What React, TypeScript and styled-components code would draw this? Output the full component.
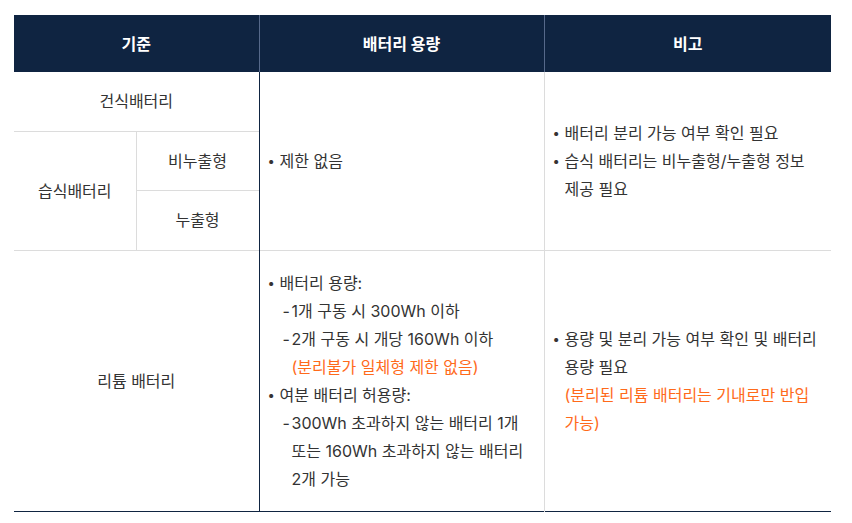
import React from 'react';
import styled, { createGlobalStyle } from 'styled-components';

const GlobalStyle = createGlobalStyle`
  body {
    margin: 0;
    background: #ffffff;
    font-family: Inter, 'Noto Sans CJK KR', sans-serif;
    color: #333333;
  }
`;

const Page = styled.div`
  padding: 15px 21px 0 14px;
`;

const Table = styled.table`
  width: 817px;
  border-collapse: collapse;
  table-layout: fixed;
  font-size: 16px;
  line-height: 28px;
  border-bottom: 1px solid #0f2441;
`;

const HeadCell = styled.th`
  height: 57px;
  padding: 0;
  background: #0f2441;
  color: #ffffff;
  font-weight: 700;
  text-align: center;
  border-left: 1px solid #56698a;
  &:first-child {
    border-left: none;
  }
`;

const Cell = styled.td<{ $align?: 'left' | 'center'; $h?: number; $navyLeft?: boolean }>`
  height: ${(p) => (p.$h ? `${p.$h}px` : 'auto')};
  padding: ${(p) => (p.$align === 'left' ? '18px 8px 18px 8px' : '0')};
  text-align: ${(p) => p.$align || 'center'};
  vertical-align: middle;
  border-top: 1px solid #dcdcdc;
  border-left: 1px solid ${(p) => (p.$navyLeft ? '#0f2441' : '#dcdcdc')};
  word-break: keep-all;
  box-sizing: border-box;
  &:first-child {
    border-left: none;
  }
`;

const FirstRowCell = styled(Cell)`
  border-top: none;
`;

const SubLabelCell = styled(Cell)`
  &:first-child {
    border-left: 1px solid #dcdcdc;
  }
`;

const List = styled.ul`
  list-style: none;
  margin: 0;
  padding: 0;
`;

const Item = styled.li`
  display: flex;
  &::before {
    content: '•';
    flex: 0 0 12px;
    font-size: 13px;
  }
`;

const ItemBody = styled.div`
  flex: 1;
`;

const SubList = styled.ul`
  list-style: none;
  margin: 0;
  padding: 0 0 0 3px;
`;

const SubItem = styled.li`
  display: flex;
  &::before {
    content: '-';
    flex: 0 0 9px;
  }
`;

const Note = styled.span`
  display: block;
  color: #ff6a1a;
`;

export default function App() {
  return (
    <>
      <GlobalStyle />
      <Page>
        <Table>
          <colgroup>
            <col style={{ width: 122 }} />
            <col style={{ width: 123 }} />
            <col style={{ width: 285 }} />
            <col style={{ width: 287 }} />
          </colgroup>
          <thead>
            <tr>
              <HeadCell colSpan={2}>기준</HeadCell>
              <HeadCell>배터리 용량</HeadCell>
              <HeadCell>비고</HeadCell>
            </tr>
          </thead>
          <tbody>
            <tr>
              <FirstRowCell colSpan={2} $h={59}>
                건식배터리
              </FirstRowCell>
              <FirstRowCell $align="left" rowSpan={3} $navyLeft>
                <List>
                  <Item>
                    <ItemBody>제한 없음</ItemBody>
                  </Item>
                </List>
              </FirstRowCell>
              <FirstRowCell $align="left" rowSpan={3}>
                <List>
                  <Item>
                    <ItemBody>배터리 분리 가능 여부 확인 필요</ItemBody>
                  </Item>
                  <Item>
                    <ItemBody>습식 배터리는 비누출형/누출형 정보 제공 필요</ItemBody>
                  </Item>
                </List>
              </FirstRowCell>
            </tr>
            <tr>
              <Cell rowSpan={2}>습식배터리</Cell>
              <Cell $h={59}>비누출형</Cell>
            </tr>
            <tr>
              <SubLabelCell $h={60}>누출형</SubLabelCell>
            </tr>
            <tr>
              <Cell colSpan={2}>리튬 배터리</Cell>
              <Cell $align="left" $navyLeft>
                <List>
                  <Item>
                    <ItemBody>
                      배터리 용량:
                      <SubList>
                        <SubItem>
                          <ItemBody>1개 구동 시 300Wh 이하</ItemBody>
                        </SubItem>
                        <SubItem>
                          <ItemBody>
                            2개 구동 시 개당 160Wh 이하
                            <Note>(분리불가 일체형 제한 없음)</Note>
                          </ItemBody>
                        </SubItem>
                      </SubList>
                    </ItemBody>
                  </Item>
                  <Item>
                    <ItemBody>
                      여분 배터리 허용량:
                      <SubList>
                        <SubItem>
                          <ItemBody>
                            300Wh 초과하지 않는 배터리 1개 또는 160Wh 초과하지 않는 배터리 2개 가능
                          </ItemBody>
                        </SubItem>
                      </SubList>
                    </ItemBody>
                  </Item>
                </List>
              </Cell>
              <Cell $align="left">
                <List>
                  <Item>
                    <ItemBody>
                      용량 및 분리 가능 여부 확인 및 배터리 용량 필요
                      <Note>(분리된 리튬 배터리는 기내로만 반입 가능)</Note>
                    </ItemBody>
                  </Item>
                </List>
              </Cell>
            </tr>
          </tbody>
        </Table>
      </Page>
    </>
  );
}
